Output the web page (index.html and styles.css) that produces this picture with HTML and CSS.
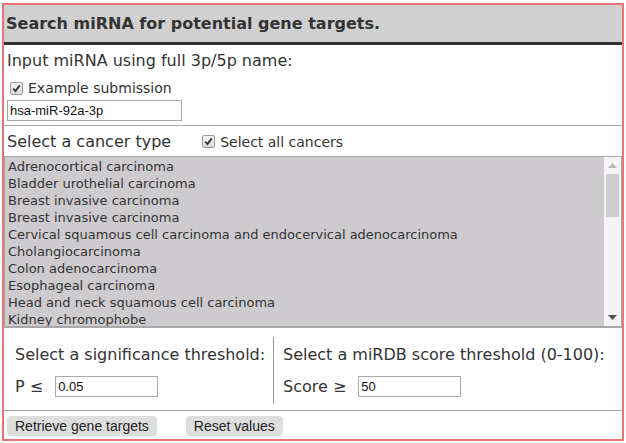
FILE: index.html
```html
<!DOCTYPE html>
<html>
<head>
<meta charset="utf-8">
<link rel="stylesheet" href="styles.css">
</head>
<body>
<div class="panel">
  <div class="header">Search miRNA for potential gene targets.</div>
  <div class="sec-input">
    <div class="label">Input miRNA using full 3p/5p name:</div>
    <div class="check-row"><span class="cbox"><svg width="9" height="9" viewBox="0 0 9 9"><path d="M1.2 4.6 L3.5 7 L7.8 1.4" fill="none" stroke="#333" stroke-width="1.8"/></svg></span><span>Example submission</span></div>
    <div class="textbox mirna">hsa-miR-92a-3p</div>
  </div>
  <div class="sec-cancer">
    <div class="cancer-head">
      <span class="label">Select a cancer type</span>
      <span class="check-row inline"><span class="cbox"><svg width="9" height="9" viewBox="0 0 9 9"><path d="M1.2 4.6 L3.5 7 L7.8 1.4" fill="none" stroke="#333" stroke-width="1.8"/></svg></span><span>Select all cancers</span></span>
    </div>
    <div class="listbox">
      <div class="items">
        <div>Adrenocortical carcinoma</div>
        <div>Bladder urothelial carcinoma</div>
        <div>Breast invasive carcinoma</div>
        <div>Breast invasive carcinoma</div>
        <div>Cervical squamous cell carcinoma and endocervical adenocarcinoma</div>
        <div>Cholangiocarcinoma</div>
        <div>Colon adenocarcinoma</div>
        <div>Esophageal carcinoma</div>
        <div>Head and neck squamous cell carcinoma</div>
        <div>Kidney chromophobe</div>
      </div>
      <div class="scrollbar">
        <svg class="arr" width="9" height="5" viewBox="0 0 9 5"><path d="M0 5 L4.5 0 L9 5Z" fill="#b8b8b8"/></svg>
        <div class="thumb"></div>
        <div class="track"></div>
        <svg class="arr" width="9" height="5" viewBox="0 0 9 5"><path d="M0 0 L4.5 5 L9 0Z" fill="#505050"/></svg>
      </div>
    </div>
  </div>
  <div class="sec-thresh">
    <div class="col left">
      <div class="label">Select a significance threshold:</div>
      <div class="field-row"><span class="sym">P <span class="rel">&le;</span></span><div class="textbox small">0.05</div></div>
    </div>
    <div class="col right">
      <div class="label">Select a miRDB score threshold (0-100):</div>
      <div class="field-row"><span class="sym">Score <span class="rel">&ge;</span></span><div class="textbox small">50</div></div>
    </div>
  </div>
  <div class="sec-buttons">
    <button class="btn">Retrieve gene targets</button>
    <button class="btn">Reset values</button>
  </div>
</div>
</body>
</html>
```
FILE: styles.css
```css
html, body {
  margin: 0;
  padding: 0;
  background: #ffffff;
}
.panel {
  margin: 3px 0 0 2px;
  width: 622px;
  height: 438px;
  box-sizing: border-box;
  border: 2px solid #e87474;
  font-family: "DejaVu Sans", Verdana, sans-serif;
  color: #333;
  display: flex;
  flex-direction: column;
}
.header {
  height: 37px;
  background: #d0d0d0;
  border-bottom: 3px solid #333;
  font-weight: bold;
  font-size: 16px;
  padding-left: 2px;
  display: flex;
  align-items: center;
  flex: none;
}
.label {
  font-size: 16px;
}
.sec-input {
  padding: 6px 0 4px 3px;
  border-bottom: 1px solid #aaa;
  flex: none;
}
.check-row {
  display: flex;
  align-items: center;
  font-size: 14px;
  margin-top: 10px;
  padding-left: 3px;
}
.check-row.inline {
  display: inline-flex;
  margin-top: 0;
  margin-left: 28px;
}
.cbox {
  width: 11px;
  height: 11px;
  border: 1px solid #9a9a9a;
  border-radius: 2px;
  background: linear-gradient(#f4f4f4, #dcdcdc);
  display: inline-flex;
  align-items: center;
  justify-content: center;
  margin-right: 5px;
}
.textbox {
  border: 1px solid #a9a9a9;
  font-family: "Liberation Sans", Arial, sans-serif;
  font-size: 13px;
  color: #111;
  box-sizing: border-box;
  display: flex;
  align-items: center;
  padding-left: 2px;
  background: #fff;
}
.mirna {
  width: 175px;
  height: 21px;
  margin-top: 4px;
}
.sec-cancer {
  display: flex;
  flex-direction: column;
  flex: none;
}
.cancer-head {
  display: flex;
  align-items: center;
  padding: 6px 0 5px 3px;
}
.listbox {
  height: 172px;
  border: 1px solid #a8a8a8;
  border-bottom-width: 2px;
  background: #cdcbce;
  display: flex;
  box-sizing: border-box;
}
.items {
  flex: 1;
  padding: 1px 0 0 3px;
  font-size: 13px;
  line-height: 17px;
  overflow: hidden;
}
.scrollbar {
  width: 17px;
  background: #f5f3f5;
  display: flex;
  flex-direction: column;
  align-items: center;
}
.scrollbar .arr {
  margin: 6px 0;
  flex: none;
}
.thumb {
  width: 13px;
  height: 43px;
  background: #cdcdcd;
  flex: none;
}
.track {
  flex: 1;
}
.sec-thresh {
  display: flex;
  border-bottom: 1px solid #aaa;
  padding: 9px 0 6px 0;
  flex: none;
}
.col {
  box-sizing: border-box;
  padding: 8px 0 7px 11px;
}
.col.left {
  width: 270px;
  border-right: 1px solid #999;
}
.col.right {
  padding-left: 9px;
}
.field-row {
  display: flex;
  align-items: center;
  margin-top: 12px;
}
.sym {
  font-size: 16px;
  margin-right: 12px;
}
.rel {
  font-size: 16px;
}
.textbox.small {
  width: 103px;
  height: 21px;
}
.sec-buttons {
  display: flex;
  padding: 5px 0 0 3px;
  gap: 29px;
}
.btn {
  font-family: "Liberation Sans", Arial, sans-serif;
  font-size: 14px;
  color: #222;
  background: #dedede;
  border: none;
  border-radius: 4px;
  height: 20px;
  padding: 0 8px;
  margin: 0;
}
```
